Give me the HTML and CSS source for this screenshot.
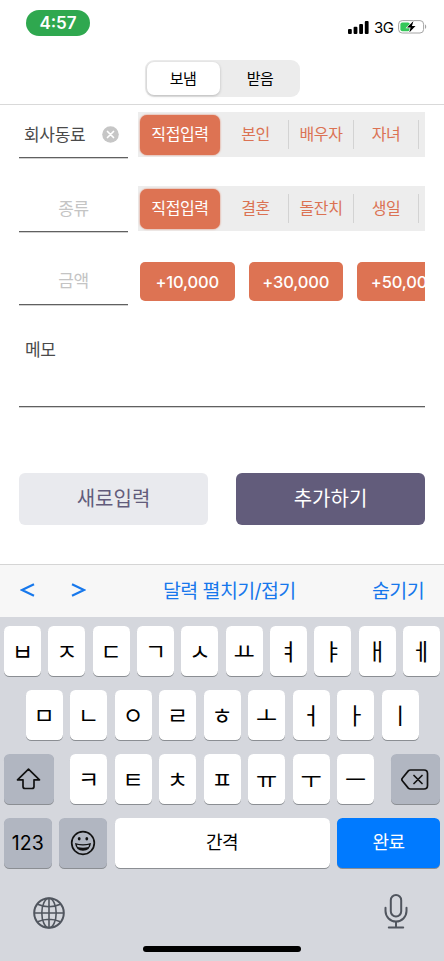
FILE: index.html
```html
<!DOCTYPE html>
<html lang="ko">
<head>
<meta charset="utf-8">
<meta name="viewport" content="width=device-width, initial-scale=1">
<title>추가하기</title>
<link rel="stylesheet" href="styles.css">
</head>
<body>
<div class="screen">
  <header class="status">
    <span class="clock">4:57</span>
    <div class="status-right">
      <svg class="signal" width="21" height="13" viewBox="0 0 21 13"><rect x="0" y="8" width="3.8" height="5" rx="1"/><rect x="5.6" y="5.8" width="3.8" height="7.2" rx="1"/><rect x="11.2" y="3" width="3.8" height="10" rx="1"/><rect x="16.8" y="0" width="3.8" height="13" rx="1"/></svg>
      <span class="network">3G</span>
      <svg class="battery" width="29" height="14" viewBox="0 0 29 14"><rect x=".6" y=".6" width="25" height="12.4" rx="3.6" fill="#fff" stroke="#a4a4a4"/><rect x="2.4" y="2.4" width="9.500" height="8.8" rx="2" fill="#35c759"/><path d="M27 4.600c1.600.6 1.600 3.800 0 4.400z" fill="#a4a4a4"/><path d="M15.500 1L9 7.600h3.600l-1.300 4.900 6.200-6.500h-3.600z" fill="#000" stroke="#fff" stroke-width="1.200" paint-order="stroke"/></svg>
    </div>
  </header>

  <nav class="tabs">
    <div class="tab-group"><button class="tab active"><span>보냄</span></button><button class="tab"><span>받음</span></button></div>
  </nav>

  <main class="form">
    <section class="row">
      <div class="field"><span class="value">회사동료</span>
        <svg class="clear" width="17" height="17" viewBox="0 0 17 17"><circle cx="8.500" cy="8.500" r="8.300" fill="#c6c6c6"/><path d="M5.500 5.500l6 6M11.500 5.500l-6 6" stroke="#fff" stroke-width="1.700" stroke-linecap="round"/></svg>
      </div>
      <div class="segments"><button class="segment selected">직접입력</button><button class="segment first">본인</button><button class="segment">배우자</button><button class="segment">자녀</button></div>
    </section>
    <section class="row">
      <div class="field empty"><span>종류</span></div>
      <div class="segments"><button class="segment selected">직접입력</button><button class="segment first">결혼</button><button class="segment">돌잔치</button><button class="segment">생일</button></div>
    </section>
    <section class="row amounts-row">
      <div class="field empty"><span>금액</span></div>
      <div class="amounts"><button class="amount">+10,000</button><button class="amount">+30,000</button><button class="amount">+50,000</button></div>
    </section>
    <div class="memo">메모</div>
    <div class="actions"><button class="action reset">새로입력</button><button class="action add">추가하기</button></div>
  </main>

  <div class="toolbar">
    <div class="arrows">
      <svg width="15" height="14" viewBox="0 0 15 14"><path d="M14 1.300L2 7l12 5.700"/></svg>
      <svg width="15" height="14" viewBox="0 0 15 14"><path d="M1 1.300L13 7 1 12.700"/></svg>
    </div>
    <span class="calendar">달력 펼치기/접기</span>
    <span class="hide">숨기기</span>
  </div>

  <div class="keyboard">
    <div class="keys"><b class="key">ㅂ</b><b class="key">ㅈ</b><b class="key">ㄷ</b><b class="key">ㄱ</b><b class="key">ㅅ</b><b class="key">ㅛ</b><b class="key">ㅕ</b><b class="key">ㅑ</b><b class="key">ㅐ</b><b class="key">ㅔ</b></div>
    <div class="keys middle"><b class="key">ㅁ</b><b class="key">ㄴ</b><b class="key">ㅇ</b><b class="key">ㄹ</b><b class="key">ㅎ</b><b class="key">ㅗ</b><b class="key">ㅓ</b><b class="key">ㅏ</b><b class="key">ㅣ</b></div>
    <div class="keys third">
      <b class="key gray shift"><svg width="25" height="22" viewBox="0 0 25 22"><path d="M12.500 1.200L1.500 11.800H7v6.700q0 2 2 2h7q2 0 2-2v-6.700h5.500z"/></svg></b>
      <div class="letters"><b class="key">ㅋ</b><b class="key">ㅌ</b><b class="key">ㅊ</b><b class="key">ㅍ</b><b class="key">ㅠ</b><b class="key">ㅜ</b><b class="key">ㅡ</b></div>
      <b class="key gray delete"><svg width="28" height="21" viewBox="0 0 28 21"><path d="M9.500 1H23q3.500 0 3.500 3.500v12q0 3.500-3.500 3.500H9.500q-1.300 0-2.200-.9L1.500 12q-1.300-1.500 0-3l5.800-7.100Q8.200 1 9.500 1zM13 6.500l8 8M21 6.500l-8 8"/></svg></b>
    </div>
    <div class="keys bottom">
      <b class="key gray numbers">123</b>
      <b class="key gray emoji"><svg width="26" height="26" viewBox="0 0 26 26"><circle cx="13" cy="13" r="11.300"/><ellipse cx="9.200" cy="8.800" rx="1.400" ry="1.700" class="solid"/><ellipse cx="16.800" cy="8.800" rx="1.400" ry="1.700" class="solid"/><path class="solid" d="M5 13q8 2.400 16 0-.8 7.700-8 7.700T5 13z"/><path class="teeth" d="M6.800 14.700q6.200 1.500 12.400 0l-.8 2.200q-5.400 1.500-10.800 0z"/></svg></b>
      <b class="key space">간격</b>
      <b class="key done">완료</b>
    </div>
    <div class="dock">
      <svg width="32" height="32" viewBox="0 0 32 32"><circle cx="16" cy="16" r="14.800" stroke-width="2"/><ellipse cx="16" cy="16" rx="7.200" ry="14.800"/><path d="M16 1.200v29.600M1.200 16h29.600M4.600 7.200q11.400 5 22.800 0M4.600 24.800q11.400-5 22.800 0"/></svg>
      <svg width="24" height="35" viewBox="0 0 24 35"><rect x="6.800" y="1" width="10.400" height="21.500" rx="5.200" stroke-width="2"/><path stroke-width="2" stroke-linecap="round" d="M1.500 13.800v3.200a10.500 10.500 0 0 0 21 0v-3.200M12 27.500v6M4.800 33.500h14.400"/></svg>
    </div>
    <div class="home"></div>
  </div>
</div>
</body>
</html>
```
FILE: styles.css
```css
* { box-sizing: border-box; }
body { margin: 0; background: #fff; font-family: Inter, "Noto Sans CJK KR", sans-serif; }
button { border: 0; padding: 0; margin: 0; background: none; font: inherit; letter-spacing: inherit; color: inherit; white-space: nowrap; }
svg { display: block; flex: none; }
.screen { width: 444px; height: 961px; overflow: hidden; display: flex; flex-direction: column; }

.status { height: 60px; flex: none; padding: 10px 17px 0 26px; display: flex; justify-content: space-between; align-items: flex-start; }
.clock { width: 64px; height: 26px; border-radius: 13px; background: #2fa84f; color: #fff; font-size: 17px; font-weight: 600; line-height: 26px; text-align: center; }
.status-right { display: flex; align-items: center; padding-top: 8px; height: 26px; }
.signal { margin-top: 1px; }
.network { font-size: 15px; font-weight: 400; margin: 2px 4px 0 5px; width: 20px; letter-spacing: -0.400px; line-height: 16px; }

.tabs { height: 45px; flex: none; border-bottom: 1px solid #d9d9d9; display: flex; justify-content: center; align-items: flex-start; }
.tab-group { width: 155px; height: 37px; border-radius: 9px; background: #ececec; padding: 2px; display: flex; font-size: 15px; font-weight: 400; }
.tab { flex: 1; border-radius: 7px; padding: 0 0 3px 3px; letter-spacing: -0.600px; }
.tab.active { flex: 0 0 73px; background: #fff; padding-left: 0; box-shadow: 0 1px 3px rgba(0,0,0,.22); }

.form { height: 459px; flex: none; padding: 7px 19px 0; color: #4a4a4a; }
.row { display: flex; gap: 10px; height: 46px; margin-bottom: 28px; }
.field { width: 109px; flex: none; border-bottom: 1px solid #606060; box-shadow: 0 1px 0 #d0d0d0; display: flex; justify-content: space-between; align-items: center; padding: 0 9px 1px 5px; font-size: 17px; letter-spacing: -0.300px; }
.value { padding-bottom: 2px; }
.field.empty { justify-content: center; padding: 0 0 3px; color: #c4c4c4; }
.segments { flex: 1; height: 45px; background: #ededed; display: flex; align-items: center; overflow: hidden; color: #db7253; font-size: 16px; }
.segment { width: 65px; height: 29px; flex: none; border-right: 1px solid #d3d3d3; padding-bottom: 3px; letter-spacing: -0.400px; }
.segment.first { width: 66px; margin-left: 3px; }
.segment.selected { width: 80px; height: 40px; margin-left: 2px; border: 0; border-radius: 7px; background: #dd7353; color: #fff; box-shadow: 0 0 2px #dd7353; }
.amounts-row { height: 45px; margin-bottom: 0; }
.amounts-row .field { padding-bottom: 5px; }
.amounts { flex: 1; display: flex; gap: 14px; padding: 2px 0 0 2px; overflow: hidden; }
.amount { width: 94.500px; height: 39px; flex: none; border-radius: 5px; background: #dd7353; color: #fff; font-size: 16.500px; font-weight: 500; letter-spacing: -0.150px; padding-bottom: 0; }
.memo { height: 102px; border-bottom: 1px solid #606060; box-shadow: 0 1px 0 #d0d0d0; padding: 33px 6px 0; font-size: 17px; line-height: 25px; letter-spacing: -0.300px; }
.actions { display: flex; gap: 28px; margin-top: 66px; }
.action { flex: 1; height: 52px; border-radius: 6px; font-size: 20px; padding-bottom: 3px; }
.reset { background: #e9eaee; color: #625c7b; }
.add { background: #625c7b; color: #fff; }

.toolbar { height: 53px; flex: none; background: #f7f7f7; border-top: 1px solid #d5d5d5; padding: 0 20px 3px; display: grid; grid-template-columns: 143px 1fr auto; align-items: center; color: #1778ec; font-size: 19.500px; letter-spacing: -0.600px; }
.arrows { display: flex; gap: 36px; }
.arrows svg { fill: none; stroke: #1778ec; stroke-width: 2.200; }

.keyboard { flex: 1; background: #d5d7dd; padding: 9px 4px 0; display: flex; flex-direction: column; }
.keys { display: flex; justify-content: space-between; height: 50px; margin-bottom: 14px; flex: none; }
.keys.middle { padding: 0 21.500px; }
.letters { width: 304px; display: flex; justify-content: space-between; }
.key { width: 37px; height: 50px; flex: none; border-radius: 5.500px; background: #fff; box-shadow: 0 1px 0 #8b8e93; display: flex; align-items: center; justify-content: center; padding-bottom: 2px; font-family: "Noto Sans CJK KR", sans-serif; font-size: 23px; font-weight: 400; color: #000; }
.gray { background: #b1b6c1; padding-bottom: 0; }
.key svg { fill: none; stroke: #111; stroke-width: 1.700; stroke-linejoin: round; stroke-linecap: round; }
.key svg .solid { fill: #111; stroke: none; }
.key svg .teeth { fill: #b1b6c1; stroke: none; }
.shift, .delete { width: 49.500px; }
.bottom { margin-bottom: 0; }
.numbers { width: 47.500px; font-family: Inter, sans-serif; font-size: 19.500px; }
.emoji { width: 48px; }
.space { width: 215px; font-size: 18px; letter-spacing: -0.500px; padding-bottom: 5px; }
.done { width: 103px; background: #007aff; color: #fff; font-size: 18px; letter-spacing: -0.500px; padding-bottom: 5px; }
.dock { display: flex; justify-content: space-between; align-items: center; margin-top: 26px; padding: 0 32px 0 29px; height: 37px; }
.dock svg { fill: none; stroke: #50555e; stroke-width: 1.600; }
.dock svg:last-child { margin-bottom: 2px; }
.home { width: 158px; height: 6px; border-radius: 3px; background: #000; margin: 15px auto 0; }
```
